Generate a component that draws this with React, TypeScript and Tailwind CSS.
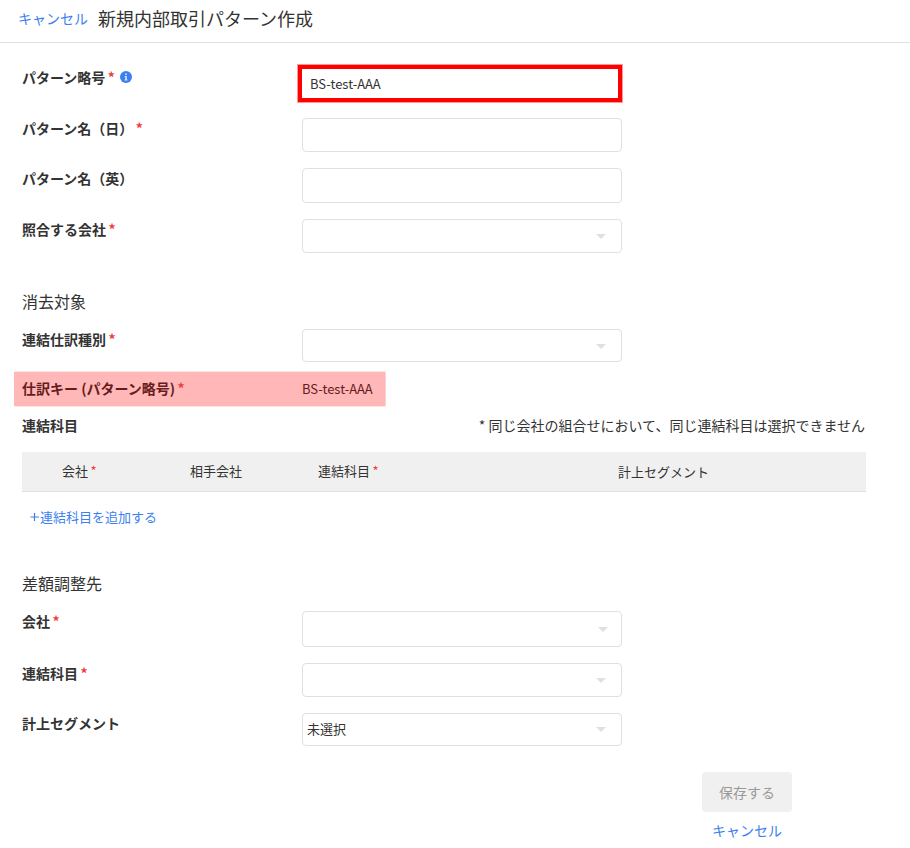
import React from "react";

function Star({ className = "font-normal" }: { className?: string }) {
  return <span className={`ml-[2.5px] text-[#ee3d3d] ${className}`}>*</span>;
}

function Label({
  text,
  required,
  className = "",
  children,
}: {
  text: string;
  required?: boolean;
  className?: string;
  children?: React.ReactNode;
}) {
  return (
    <div className={`flex h-5 w-[280px] shrink-0 items-center font-bold leading-5 ${className}`}>
      <span>{text}</span>
      {required && <Star className="font-bold" />}
      {children}
    </div>
  );
}

function Caret({ className = "mr-[15px]" }: { className?: string }) {
  return (
    <svg width="10" height="5" viewBox="0 0 10 5" className={`shrink-0 ${className}`}>
      <path d="M0 0H10L5 5Z" fill="#e0e0e0" />
    </svg>
  );
}

const box = "flex w-[320px] items-center justify-between rounded-[4px] border border-[#e0e0e0] bg-white text-[13px]";

export default function App() {
  return (
    <div
      lang="ja"
      className="h-[848px] w-[910px] overflow-hidden bg-white font-['Noto_Sans_CJK_JP',sans-serif] text-[14px] leading-5 text-[#333333]"
    >
      <header className="flex h-[43px] items-center border-b border-[#e0e0e0] pb-[6px] pl-[18px]">
        <a className="text-[#3c7ff0]">キャンセル</a>
        <h1 className="ml-[10px] text-[18px] leading-6">新規内部取引パターン作成</h1>
      </header>

      <main className="pl-[22px] pt-[25px]">
        <div className="flex h-[50px]">
          <Label text="パターン略号" required className="-mt-px">
            <svg width="12" height="12" viewBox="0 0 12 12" className="ml-[5.5px]">
              <circle cx="6" cy="6" r="6" fill="#3c7ff0" />
              <path d="M5.2 2.5h1.6v1.4H5.2zM4.7 5h2.1v3.4h.6v1H4.6v-1h.6V6h-.5z" fill="#dbe8ff" />
            </svg>
          </Label>
          <div className="-ml-1 -mt-[3px] flex h-[37px] w-[324px] items-center border-4 border-[#ff0000] pl-2 text-[13px] shadow-[0_0_0_1px_rgba(255,0,0,0.4)]">
            BS-test-AAA
          </div>
        </div>
        <div className="flex h-[50px]">
          <Label text="パターン名（日）" required />
          <div className={`${box} h-[34px]`} />
        </div>
        <div className="flex h-[51px]">
          <Label text="パターン名（英）" />
          <div className={`${box} h-[35px]`} />
        </div>
        <div className="flex h-[72px]">
          <Label text="照合する会社" required />
          <div className={`${box} h-[34px]`}><span /><Caret /></div>
        </div>

        <h2 className="h-[38px] text-[16px]">消去対象</h2>
        <div className="flex h-[43px]">
          <Label text="連結仕訳種別" required />
          <div className={`${box} h-[33px]`}><span /><Caret className="mr-[15px] mt-px" /></div>
        </div>
        <div className="-ml-2 flex h-[34px] w-[371px] items-center bg-[#ffb7b7] pl-2 text-[#661c1c] shadow-[1px_1px_0_0_rgba(255,183,183,0.4),1px_-1px_0_0_rgba(255,183,183,0.4)]">
          <Label text="仕訳キー (パターン略号)" required className="-mt-[2px]" />
          <span className="text-[13px]">BS-test-AAA</span>
        </div>
        <div className="mt-[9px] flex h-[37px] w-[843px] justify-between">
          <span className="font-bold">連結科目</span>
          <span>* 同じ会社の組合せにおいて、同じ連結科目は選択できません</span>
        </div>
        <div className="flex h-10 w-[844px] items-center border-b border-[#e0e0e0] bg-[#f0f0f0] pl-10 text-[13px]">
          <div className="w-32 pb-[2px]">会社<Star /></div>
          <div className="w-32 pb-[2px]">相手会社</div>
          <div className="w-[300px] pb-[2px]">連結科目<Star /></div>
          <div>計上セグメント</div>
        </div>
        <a className="flex h-[81px] pl-2 pt-[15px] text-[13px] text-[#3c7ff0]">
          <svg width="10" height="10" viewBox="0 0 10 10" className="mt-[5px]">
            <path d="M4.5 1V9M.5 5H9" stroke="#3c7ff0" strokeWidth="1.2" />
          </svg>
          <span>連結科目を追加する</span>
        </a>

        <h2 className="h-[38px] text-[16px]">差額調整先</h2>
        <div className="flex h-[52px]">
          <Label text="会社" required />
          <div className={`${box} h-[36px]`}><span /><Caret className="mr-[13px]" /></div>
        </div>
        <div className="flex h-[50px]">
          <Label text="連結科目" required />
          <div className={`${box} h-[34px]`}><span /><Caret /></div>
        </div>
        <div className="flex h-[59px]">
          <Label text="計上セグメント" />
          <div className={`${box} h-[33px] pl-1`}><span className="pb-[2px]">未選択</span><Caret /></div>
        </div>
        <div className="ml-[680px] flex w-[90px] flex-col items-center">
          <button className="h-10 w-[90px] rounded-[4px] bg-[#f0f0f0] pb-px text-[#999999]">保存する</button>
          <a className="mt-[8px] text-[#3c7ff0]">キャンセル</a>
        </div>
      </main>
    </div>
  );
}
